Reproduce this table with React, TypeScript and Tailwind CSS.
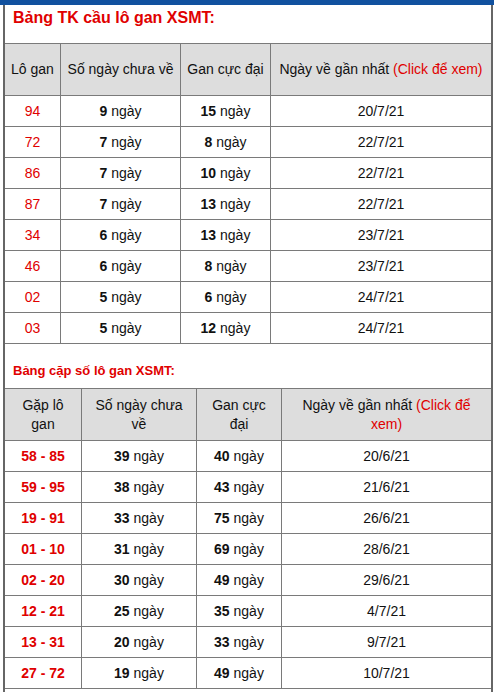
import React from "react";

const t1 = [
  ["94", "9", "15", "20/7/21"],
  ["72", "7", "8", "22/7/21"],
  ["86", "7", "10", "22/7/21"],
  ["87", "7", "13", "22/7/21"],
  ["34", "6", "13", "23/7/21"],
  ["46", "6", "8", "23/7/21"],
  ["02", "5", "6", "24/7/21"],
  ["03", "5", "12", "24/7/21"],
];

const t2 = [
  ["58 - 85", "39", "40", "20/6/21"],
  ["59 - 95", "38", "43", "21/6/21"],
  ["19 - 91", "33", "75", "26/6/21"],
  ["01 - 10", "31", "69", "28/6/21"],
  ["02 - 20", "30", "49", "29/6/21"],
  ["12 - 21", "25", "35", "4/7/21"],
  ["13 - 31", "20", "33", "9/7/21"],
  ["27 - 72", "19", "49", "10/7/21"],
];

export default function App() {
  return (
    <div
      className="w-[497px] h-[692px] overflow-hidden bg-white text-[14px] text-[#111]"
      style={{ fontFamily: '"Liberation Sans", Arial, sans-serif' }}
    >
      <div className="h-[5px] w-[494px] bg-[#11519f]" />
      <div className="ml-[3px] w-[490px] border-x-2 border-[#666] pb-[20px]">
        <div className="h-[38px] pt-[4px] pl-[8px]">
          <div className="text-[16px] leading-[18px] font-bold text-[#e00000]">
            Bảng TK cầu lô gan XSMT:
          </div>
        </div>
        <div className="border-t border-[#7a7a7a]">
          <div className="flex h-[52px] bg-[#dddddd] border-b border-[#7a7a7a]">
            <div className="w-[55px] flex items-center justify-center">Lô gan</div>
            <div className="w-[120px] border-l border-[#7a7a7a] flex items-center justify-center">
              Số ngày chưa về
            </div>
            <div className="w-[90px] border-l border-[#7a7a7a] flex items-center justify-center">
              Gan cực đại
            </div>
            <div className="w-[221px] border-l border-[#7a7a7a] flex items-center justify-center">
              <span>
                Ngày về gần nhất <span className="text-[#e00000]">(Click để xem)</span>
              </span>
            </div>
          </div>
          {t1.map((r, i) => (
            <div key={i} className="flex h-[31px] border-b border-[#7a7a7a]">
              <div className="w-[55px] flex items-center justify-center text-[#e00000]">{r[0]}</div>
              <div className="w-[120px] border-l border-[#7a7a7a] flex items-center justify-center">
                <span>
                  <b>{r[1]}</b> ngày
                </span>
              </div>
              <div className="w-[90px] border-l border-[#7a7a7a] flex items-center justify-center">
                <span>
                  <b>{r[2]}</b> ngày
                </span>
              </div>
              <div className="w-[221px] border-l border-[#7a7a7a] flex items-center justify-center">
                {r[3]}
              </div>
            </div>
          ))}
        </div>
        <div className="h-[44px] pt-[19px] pl-[8px]">
          <div className="text-[13px] leading-[15px] font-bold text-[#e00000]">
            Bảng cặp số lô gan XSMT:
          </div>
        </div>
        <div className="border-t border-[#7a7a7a]">
          <div className="flex h-[52px] bg-[#dddddd] border-b border-[#7a7a7a] leading-[19px] text-center">
            <div className="w-[76px] flex items-center justify-center px-[6px]">Gặp lô gan</div>
            <div className="w-[115px] border-l border-[#7a7a7a] flex items-center justify-center px-[8px]">
              Số ngày chưa về
            </div>
            <div className="w-[85px] border-l border-[#7a7a7a] flex items-center justify-center px-[8px]">
              Gan cực đại
            </div>
            <div className="w-[210px] border-l border-[#7a7a7a] flex items-center justify-center px-[8px]">
              <p>
                Ngày về gần nhất <span className="text-[#e00000]">(Click để xem)</span>
              </p>
            </div>
          </div>
          {t2.map((r, i) => (
            <div key={i} className="flex h-[31px] border-b border-[#7a7a7a]">
              <div className="w-[76px] flex items-center justify-center text-[#e00000] font-bold">
                {r[0]}
              </div>
              <div className="w-[115px] border-l border-[#7a7a7a] flex items-center justify-center">
                <span>
                  <b>{r[1]}</b> ngày
                </span>
              </div>
              <div className="w-[85px] border-l border-[#7a7a7a] flex items-center justify-center">
                <span>
                  <b>{r[2]}</b> ngày
                </span>
              </div>
              <div className="w-[210px] border-l border-[#7a7a7a] flex items-center justify-center">
                {r[3]}
              </div>
            </div>
          ))}
        </div>
      </div>
    </div>
  );
}
